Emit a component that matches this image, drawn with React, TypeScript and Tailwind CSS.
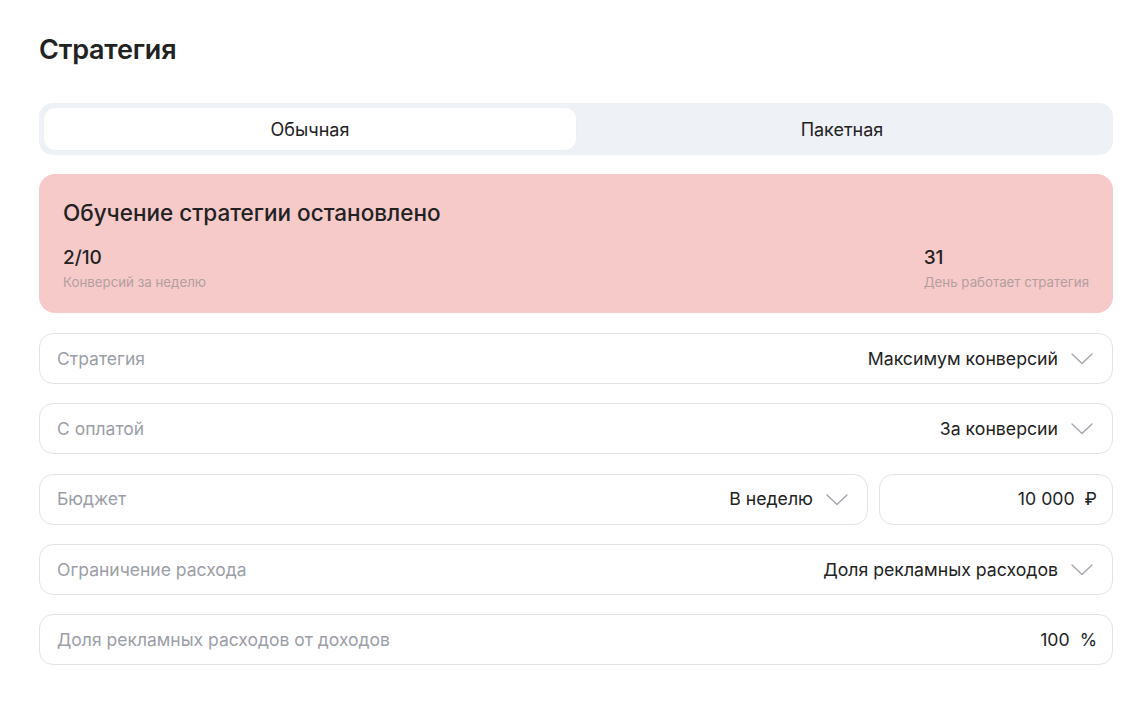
import { ReactNode } from 'react'

function Chevron() {
  return (
    <svg width="22" height="12" viewBox="0 0 22 12" fill="none" className="shrink-0">
      <path d="M1 1l10 9.5L21 1" stroke="#a3a6ad" strokeWidth="1.4" strokeLinecap="round" strokeLinejoin="round" />
    </svg>
  )
}

function Field({ label, value, select = true, className = '' }: { label?: string; value: ReactNode; select?: boolean; className?: string }) {
  return (
    <div className={`flex items-center h-[51px] pl-[17px] pr-[19px] pt-[1px] border border-[#e2e3e6] rounded-[14px] bg-white ${className}`}>
      {label && <span className="text-[17.5px] text-[#9b9ea6]">{label}</span>}
      <div className="ml-auto flex items-center gap-[13px]">
        <span className="text-[17.7px] text-[#222222]">{value}</span>
        {select && <Chevron />}
      </div>
    </div>
  )
}

export default function App() {
  return (
    <div className="min-h-screen bg-white px-[39px] pt-[32px] w-[1152px]" style={{ fontFamily: 'Inter, "Open Sans", sans-serif' }}>
      <h1 className="text-[27px] font-semibold text-[#222222] leading-[36px] tracking-[-0.2px]">Стратегия</h1>

      {/* Tabs */}
      <div className="mt-[35px] w-[1074px] h-[52px] bg-[#eef1f5] rounded-[14px] p-[5px] flex">
        <div className="flex-1 bg-white rounded-[11px] flex items-center justify-center text-[18px] text-[#222222] shadow-[0_0_2px_rgba(0,0,0,0.04)]">Обычная</div>
        <div className="flex-1 flex items-center justify-center text-[18px] text-[#222222]">Пакетная</div>
      </div>

      {/* Status card */}
      <div className="mt-[19px] w-[1074px] h-[139px] bg-[#f7caca] rounded-[16px] px-[24px] pt-[24px]">
        <div className="text-[22.5px] font-medium text-[#222222] leading-[30px]">Обучение стратегии остановлено</div>
        <div className="mt-[18px] flex justify-between">
          <div>
            <div className="text-[19px] font-medium text-[#222222] leading-[24px]">2/10</div>
            <div className="text-[13.3px] text-[#b39e9f] leading-[24px]">Конверсий за неделю</div>
          </div>
          <div>
            <div className="text-[19px] font-medium text-[#222222] leading-[24px]">31</div>
            <div className="text-[13.3px] text-[#b39e9f] leading-[24px]">День работает стратегия</div>
          </div>
        </div>
      </div>

      <div className="mt-[20px] w-[1074px] flex flex-col gap-[19.3px]">
        <Field label="Стратегия" value="Максимум конверсий" />
        <Field label="С оплатой" value="За конверсии" />
        <div className="flex gap-[11px]">
          <Field label="Бюджет" value="В неделю" className="flex-1" />
          <Field value={<span>10 000&nbsp;&nbsp;₽</span>} select={false} className="w-[234px] !pr-[15px]" />
        </div>
        <Field label="Ограничение расхода" value="Доля рекламных расходов" />
        <Field label="Доля рекламных расходов от доходов" value={<span>100&nbsp;&nbsp;%</span>} select={false} className="!pr-[15px]" />
      </div>
    </div>
  )
}
